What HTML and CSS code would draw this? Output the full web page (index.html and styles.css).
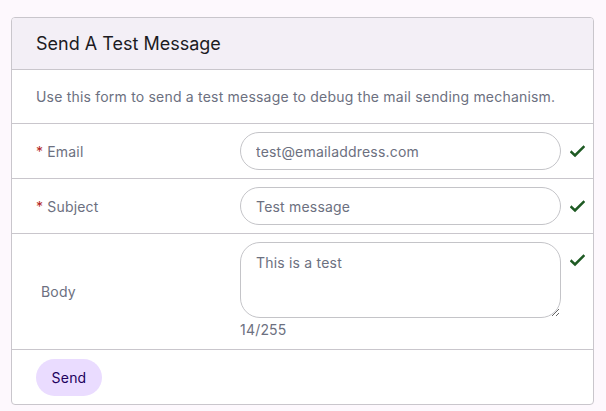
FILE: index.html
```html
<!DOCTYPE html>
<html>
<head>
<meta charset="utf-8">
<link rel="stylesheet" href="styles.css">
</head>
<body>
<div class="card">
  <div class="card-header">Send A Test Message</div>
  <div class="card-desc">Use this form to send a test message to debug the mail sending mechanism.</div>
  <div class="row">
    <div class="label"><span class="req">*</span>Email</div>
    <div class="field"><input class="input" type="text" value="test@emailaddress.com"></div>
    <div class="check"><svg width="15" height="13" viewBox="0 0 15 13"><path d="M1.5 7.2 L5 10.5 L13.5 2" fill="none" stroke="#1e5a23" stroke-width="2.6" stroke-linecap="square"/></svg></div>
  </div>
  <div class="row">
    <div class="label"><span class="req">*</span>Subject</div>
    <div class="field"><input class="input" type="text" value="Test message"></div>
    <div class="check"><svg width="15" height="13" viewBox="0 0 15 13"><path d="M1.5 7.2 L5 10.5 L13.5 2" fill="none" stroke="#1e5a23" stroke-width="2.6" stroke-linecap="square"/></svg></div>
  </div>
  <div class="row row-body">
    <div class="label label-plain">Body</div>
    <div class="field">
      <textarea class="textarea">This is a test</textarea>
      <div class="counter">14/255</div>
    </div>
    <div class="check check-top"><svg width="15" height="13" viewBox="0 0 15 13"><path d="M1.5 7.2 L5 10.5 L13.5 2" fill="none" stroke="#1e5a23" stroke-width="2.6" stroke-linecap="square"/></svg></div>
  </div>
  <div class="card-footer"><button class="btn">Send</button></div>
</div>
</body>
</html>
```
FILE: styles.css
```css
html, body {
  margin: 0;
  padding: 0;
  background: #fdf8fd;
}
body {
  padding: 17px 12px 0 11px;
  font-family: Inter, "Noto Sans", sans-serif;
}
.card {
  border: 1px solid #c9c6cc;
  border-radius: 4px;
  background: #ffffff;
  overflow: hidden;
}
.card-header {
  background: #f3eff6;
  height: 51px;
  display: flex;
  align-items: center;
  padding-left: 24px;
  font-size: 18px;
  color: #1c1b1f;
  border-bottom: 1px solid #c9c6cc;
}
.card-desc {
  height: 53px;
  display: flex;
  align-items: center;
  padding-left: 24px;
  font-size: 14px;
  letter-spacing: 0.2px;
  color: #6c7080;
  border-bottom: 1px solid #c9c6cc;
}
.row {
  display: grid;
  grid-template-columns: 204px 321px 1fr;
  align-items: center;
  padding: 8px 0 8px 24px;
  border-bottom: 1px solid #c9c6cc;
}
.label {
  font-size: 14px;
  letter-spacing: 0.2px;
  color: #6c7080;
}
.req {
  color: #b3261e;
  margin-right: 4px;
}
.label-plain {
  padding-left: 5px;
}
.input {
  box-sizing: border-box;
  width: 321px;
  height: 38px;
  border: 1px solid #c4c4c8;
  border-radius: 19px;
  padding: 0 15px;
  font-family: Inter, "Noto Sans", sans-serif;
  font-size: 14px;
  letter-spacing: 0.2px;
  color: #6c7080;
  background: #fff;
  outline: none;
  display: block;
}
.check {
  padding-left: 9px;
  display: flex;
  align-items: center;
}
.row-body {
  padding-bottom: 8px;
}
.check-top {
  align-self: start;
  padding-top: 12px;
}
.textarea {
  box-sizing: border-box;
  display: block;
  width: 321px;
  height: 76px;
  border: 1px solid #c4c4c8;
  border-radius: 20px;
  padding: 11px 15px;
  font-family: Inter, "Noto Sans", sans-serif;
  font-size: 14px;
  letter-spacing: 0.2px;
  color: #6c7080;
  resize: vertical;
  outline: none;
  margin: 0;
}
.counter {
  font-size: 14px;
  letter-spacing: 0.2px;
  color: #6c7080;
  line-height: 22px;
  padding-top: 1px;
}
.card-footer {
  height: 54px;
  display: flex;
  align-items: center;
  padding-left: 24px;
}
.btn {
  width: 66px;
  height: 37px;
  border: none;
  border-radius: 19px;
  background: #eadcff;
  color: #21005d;
  font-family: Inter, "Noto Sans", sans-serif;
  font-size: 14px;
  letter-spacing: 0.2px;
  padding: 0;
}
```
